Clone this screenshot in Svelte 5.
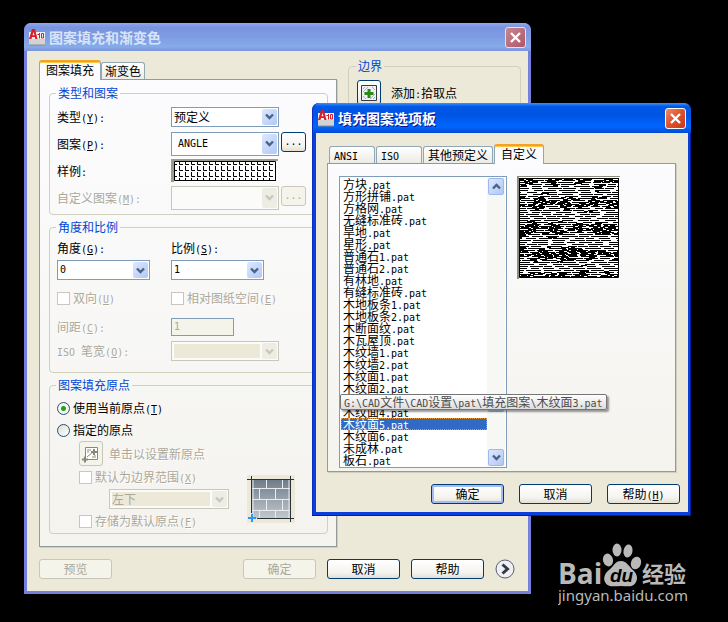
<script>
  const files = [
    "方块.pat", "方形拼铺.pat", "方格网.pat", "无缝标准砖.pat", "旱地.pat", "星形.pat",
    "普通石1.pat", "普通石2.pat", "有林地.pat", "有缝标准砖.pat", "木地板条1.pat", "木地板条2.pat",
    "木断面纹.pat", "木瓦屋顶.pat", "木纹墙1.pat", "木纹墙2.pat", "木纹面1.pat", "木纹面2.pat",
    "木纹面3.pat", "木纹面4.pat", "木纹面5.pat", "木纹面6.pat", "未成林.pat", "板石.pat"
  ]
  const hovered = "木纹面3.pat"
  const folder = "G:\\CAD文件\\CAD设置\\pat\\填充图案\\"

  let selected = $state("木纹面5.pat")
  let origin = $state("current")

  // latin runs get the narrow mono face, "&X" marks a mnemonic
  function split(text) {
    return text.match(/&.|[\x20-\x25\x27-\x7e]+|[^\x00-\x7f]+/g).map((s) => ({
      s: s.replace("&", ""),
      key: s[0] === "&",
      latin: s.charCodeAt(0) < 128
    }))
  }

  // wood grain: long dashes on every other line, filled in between where the wave is high
  function grain() {
    let seed = 11
    const rnd = () => (seed = (seed * 16807) % 2147483647) / 2147483647
    let d = ""
    for (let y = 0; y < 100; y++) {
      let x = -Math.floor(rnd() * 10)
      while (x < 100) {
        const wave = Math.sin((x * Math.PI * 2) / 25 + y / 8) + 1.5 * Math.cos((y * Math.PI * 2) / 25)
        const main = y % 2 === 0
        const len = main ? 8 + Math.floor(rnd() * 10) : 4 + Math.floor(rnd() * 6)
        if (main || rnd() * 3 - 0.8 < wave) d += `M${x} ${y}h${len}v1h-${len}z`
        x += len + 1 + Math.floor(rnd() * (wave > 0 ? 3 : 6))
      }
    }
    return d
  }
  const grainPath = grain()
</script>

{#snippet t(text)}{#each split(text) as p}{#if p.key}<u class="en">{p.s}</u>{:else if p.latin}<span class="en">{p.s}</span>{:else}{p.s}{/if}{/each}{/snippet}

{#snippet appIcon()}
  <svg class="app-icon" width="16" height="17" viewBox="0 0 16 17" aria-hidden="true">
    <path d="M0 3h16v13H0z" fill="#f2f2f4" />
    <path d="M0 10h16v6H0z" fill="#d3d3d6" />
    <path d="M0 16h16" stroke="#8d8a88" stroke-width="1" />
    <path fill-rule="evenodd" d="M3 0h3l2.500 10H6.300l-.5-2H3l-.5 2H0zM4.500 3 3.500 6.300h2z" fill="#d81f26" />
    <path d="M8.500 5.500h1.500M10.500 4v5.500M12.500 4.500h2v4.500h-2z" fill="none" stroke="#d81f26" />
  </svg>
{/snippet}

{#snippet cross()}
  <svg width="13" height="13" viewBox="0 0 13 13" aria-hidden="true"><path d="M2 2l9 9M11 2l-9 9" stroke="#fff" stroke-width="2.400" /></svg>
{/snippet}

{#snippet chevron()}
  <svg width="9" height="7" viewBox="0 0 9 7" aria-hidden="true"><path d="M1 1.500l3.500 3.500L8 1.500" fill="none" stroke="currentColor" stroke-width="2.400" /></svg>
{/snippet}

{#snippet combo(id, value, extra, disabled = false)}
  <span class="combo {extra}" class:disabled>
    <select {id} {disabled}><option>{value}</option></select>
    <span class="arrow">{@render chevron()}</span>
  </span>
{/snippet}

<main>
  <section class="window back" aria-label="图案填充和渐变色">
    <header>
      {@render appIcon()}
      <h1>图案填充和渐变色</h1>
      <button type="button" class="close" aria-label="关闭">{@render cross()}</button>
    </header>
    <div class="body">
      <div class="columns">
        <div>
          <div class="tabs">
            <button type="button" class="tab active">图案填充</button>
            <button type="button" class="tab">渐变色</button>
          </div>
          <div class="panel settings">
            <fieldset>
              <legend>类型和图案</legend>
              <div class="form">
                <label for="type">{@render t("类型(&Y):")}</label>
                <div>{@render combo("type", "预定义", "wide")}</div>
                <label for="pattern">{@render t("图案(&P):")}</label>
                <div class="pick">
                  {@render combo("pattern", "ANGLE", "wide tall latin indent")}
                  <button type="button" class="btn more">...</button>
                </div>
                <span>{@render t("样例:")}</span>
                <svg class="swatch" width="107" height="23" viewBox="0 0 107 23" aria-hidden="true">
                  <defs>
                    <pattern id="angle" width="6" height="6" patternUnits="userSpaceOnUse">
                      <path d="M2.500 1v4.500H6" fill="none" stroke="#000" />
                    </pattern>
                  </defs>
                  <path d="M0 0h107v23H0z" fill="#fff" />
                  <path d="M0 0h107v2H3v21H0z" fill="#9d9a8e" />
                  <path d="M3 3h102v19H3z" fill="url(#angle)" />
                  <path d="M3.500 2.500h101v19h-101z" fill="none" stroke="#000" />
                </svg>
                <label class="off" for="custom">{@render t("自定义图案(&M):")}</label>
                <div class="pick">
                  {@render combo("custom", "", "wide tall", true)}
                  <button type="button" class="btn more" disabled>...</button>
                </div>
              </div>
            </fieldset>

            <fieldset>
              <legend>角度和比例</legend>
              <div class="scale">
                <label for="angle-value">{@render t("角度(&G):")}</label>
                <label for="scale-value">{@render t("比例(&S):")}</label>
                {@render combo("angle-value", "0", "latin")}
                {@render combo("scale-value", "1", "latin")}
                <label class="check off"><input type="checkbox" disabled /><span>{@render t("双向(&U)")}</span></label>
                <label class="check off"><input type="checkbox" disabled /><span>{@render t("相对图纸空间(&E)")}</span></label>
                <label class="off" for="spacing">{@render t("间距(&C):")}</label>
                <input id="spacing" class="text" type="text" value="1" disabled />
                <label class="off" for="pen">{@render t("ISO 笔宽(&O):")}</label>
                {@render combo("pen", "", "wide filled", true)}
              </div>
            </fieldset>

            <fieldset>
              <legend>图案填充原点</legend>
              <div class="origin">
                <label class="check"><input type="radio" name="origin" value="current" bind:group={origin} /><span>{@render t("使用当前原点(&T)")}</span></label>
                <label class="check"><input type="radio" name="origin" value="custom" bind:group={origin} /><span>指定的原点</span></label>
                <div class="nested">
                  <div class="set-origin off">
                    <button type="button" class="btn icon" disabled aria-label="单击以设置新原点">
                      <svg width="18" height="18" viewBox="0 0 18 18" aria-hidden="true">
                        <path d="M3.500 2.500h12v12h-12z" fill="#fff" stroke="#8c8874" />
                        <path d="M5 4h4v2H7v2H5zM12 10h2v3h-4v-2h2z" fill="#c8c5b4" />
                        <path d="M12 4v6M9 7h6M3 11.500v6M0 14.500h6" stroke="#8c8874" stroke-width="2" />
                        <path d="M5 12l6-5" stroke="#8c8874" />
                      </svg>
                    </button>
                    <span>单击以设置新原点</span>
                  </div>
                  <div class="extent">
                    <div>
                      <label class="check off"><input type="checkbox" disabled /><span>{@render t("默认为边界范围(&X)")}</span></label>
                      <div class="corner">{@render combo("corner", "左下", "corner-box filled", true)}</div>
                      <label class="check off"><input type="checkbox" disabled /><span>{@render t("存储为默认原点(&F)")}</span></label>
                    </div>
                    <svg width="48" height="48" viewBox="0 0 48 48" aria-hidden="true">
                      <defs>
                        <linearGradient id="brick" x2="0" y2="1">
                          <stop offset="0" stop-color="#6f7c88" />
                          <stop offset="1" stop-color="#c3c8cf" />
                        </linearGradient>
                      </defs>
                      <path d="M0 0h48v48H0z" fill="#ece9d8" />
                      <path d="M5 5h38v38H5z" fill="url(#brick)" />
                      <path d="M5 13.500h38M5 24.500h38M5 35.500h38M19.500 5v8M35.500 5v8M12.500 14v10M28.500 14v10M19.500 25v10M35.500 25v10M12.500 36v7M28.500 36v7M6 5v38M42 5v38" stroke="#e8ebf0" fill="none" />
                      <path d="M0 4.500h47M10 43.500h37M4.500 1v37M43.500 1v46" stroke="#2c3338" />
                      <path d="M5 39v8M1 43h8" stroke="#3195f5" stroke-width="2" />
                    </svg>
                  </div>
                </div>
              </div>
            </fieldset>
          </div>
        </div>

        <fieldset class="boundary">
          <legend>边界</legend>
          <div class="add-point">
            <button type="button" class="btn icon" aria-label="添加:拾取点">
              <svg width="16" height="16" viewBox="0 0 16 16" aria-hidden="true">
                <path d="M.500.500h15v15H.500z" fill="#eef2f5" stroke="#333c44" />
                <path d="M2 4l2-2M2 7l5-5M9 14l5-5M12 14l2-2M11 2l3 3M2 11l3 3" stroke="#aab4bc" />
                <path d="M8 4v9M3.500 8.500h9" stroke="#2a8a10" stroke-width="3" />
              </svg>
            </button>
            <span>{@render t("添加:拾取点")}</span>
          </div>
        </fieldset>
      </div>

      <footer>
        <button type="button" class="btn preview-btn" disabled>预览</button>
        <button type="button" class="btn" disabled>确定</button>
        <button type="button" class="btn">取消</button>
        <button type="button" class="btn">帮助</button>
        <button type="button" class="expand" aria-label="更多选项">
          <svg width="20" height="20" viewBox="0 0 20 20" aria-hidden="true">
            <circle cx="10" cy="10" r="9" fill="#eef0f5" stroke="#5b6068" />
            <path d="M7.500 5.500l5 4.500-5 4.500" fill="none" stroke="#343a46" stroke-width="3" />
          </svg>
        </button>
      </footer>
    </div>
  </section>

  <section class="window front" aria-label="填充图案选项板">
    <header>
      {@render appIcon()}
      <h1>填充图案选项板</h1>
      <button type="button" class="close" aria-label="关闭">{@render cross()}</button>
    </header>
    <div class="body">
      <div class="tabs">
        <button type="button" class="tab">{@render t("ANSI")}</button>
        <button type="button" class="tab">{@render t("ISO")}</button>
        <button type="button" class="tab">其他预定义</button>
        <button type="button" class="tab active">自定义</button>
      </div>
      <div class="panel palette">
        <div class="listbox">
          <ul role="listbox" aria-label="自定义">
            {#each files as file}
              <!-- svelte-ignore a11y_click_events_have_key_events -->
              <li role="option" aria-selected={file === selected} class:selected={file === selected} onclick={() => (selected = file)}>
                {#if file === hovered}
                  <span class="tooltip">{@render t(folder + file)}</span>
                {:else}
                  {@render t(file)}
                {/if}
              </li>
            {/each}
          </ul>
          <div class="scrollbar">
            <button type="button" class="up" aria-label="向上">{@render chevron()}</button>
            <span class="thumb"></span>
            <button type="button" aria-label="向下">{@render chevron()}</button>
          </div>
        </div>
        <svg class="sample" width="103" height="103" viewBox="0 0 103 103" aria-hidden="true">
          <path d="M0 0h103v103H0z" fill="#fff" />
          <path d="M0 0h103v1H2v102H0z" fill="#8f8c7e" />
          <svg x="2" y="2" width="100" height="100" viewBox="0 0 100 100">
            <path d={grainPath} shape-rendering="crispEdges" />
            <path d="M.500.500h99v99H.500z" fill="none" stroke="#000" />
          </svg>
        </svg>
      </div>
      <footer>
        <button type="button" class="btn default">确定</button>
        <button type="button" class="btn">取消</button>
        <button type="button" class="btn">{@render t("帮助(&H)")}</button>
      </footer>
    </div>
  </section>

  <svg class="watermark" width="134" height="66" viewBox="0 0 134 66" role="img" aria-label="Baidu 经验">
    <g fill="#b9b9b9">
      <text x="0" y="41" class="brand">Bai</text>
      <ellipse cx="50" cy="17" rx="5" ry="6.500" transform="rotate(-15 50 17)" />
      <ellipse cx="59" cy="7" rx="4.500" ry="6.500" />
      <ellipse cx="70" cy="8" rx="4.500" ry="6.500" transform="rotate(10 70 8)" />
      <ellipse cx="78" cy="20" rx="5" ry="6.500" transform="rotate(20 78 20)" />
      <path d="M63 18c6 0 8 6 12 9 4 4 5 8 3 12-3 6-9 4-15 4s-13 2-16-4c-2-4 0-9 4-12 5-4 6-9 12-9z" />
      <text x="84" y="39" class="jy">经验</text>
      <text x="0" y="58" class="url">jingyan.baidu.com</text>
    </g>
    <text x="52" y="39" class="du">du</text>
  </svg>
</main>

<style>
  :global(body) {
    background: #000;
  }

  main {
    position: relative;
    min-height: 100vh;
    overflow: hidden;
    font: 12px/16px "Noto Sans CJK SC", "Liberation Sans", sans-serif;
    color: #000;
  }

  main :global(*) {
    box-sizing: border-box;
  }

  button,
  input,
  select {
    margin: 0;
    font: inherit;
    color: inherit;
  }

  svg {
    display: block;
    flex: none;
  }

  .en {
    font-family: "DejaVu Sans Mono", monospace;
    font-size: 10px;
    line-height: 10px;
    white-space: pre;
  }

  .window {
    position: absolute;
    border-radius: 7px 7px 0 0;
  }

  .back {
    left: 24px;
    right: 197px;
    top: 23px;
    padding: 0 3px 3px;
    background: #7480dc;
  }

  .front {
    left: 312px;
    right: 37px;
    top: 103px;
    padding: 0 3px 4px 4px;
    background: #0a3fdc;
    box-shadow: inset -1px -1px #001ea0, inset 1px 0 #0a2fc0;
  }

  header {
    display: flex;
    align-items: center;
    gap: 4px;
    height: 28px;
    margin: 0 -3px;
    padding: 0 5px;
    border-radius: 7px 7px 0 0;
    background: linear-gradient(#8ea9ec, #7a94df 15%, #7f9ce3 50%, #86abea 85%, #7b92dc);
    color: #d8e4f8;
  }

  .front header {
    height: 30px;
    background: linear-gradient(#3a91ff, #0058e6 12%, #0054e3 40%, #0066ff 80%, #0049d0);
    color: #fff;
    text-shadow: 1px 1px #0f1089;
  }

  h1 {
    flex: 1;
    margin: 0;
    font-size: 14px;
    line-height: 20px;
    font-weight: 700;
  }

  .close {
    display: grid;
    place-items: center;
    width: 21px;
    height: 21px;
    padding: 0;
    border: 1px solid #dfe3f4;
    border-radius: 3px;
    background: linear-gradient(135deg, #c98591, #ad5868);
  }

  .front .close {
    border-color: #fff;
    background: linear-gradient(135deg, #ee8a68, #e0502a 50%, #c8381a);
  }

  .body {
    background: #ece9d8;
  }

  .back .body {
    padding: 9px 7px 12px 12px;
  }

  .front .body {
    padding: 11px 12px 8px 11px;
  }

  .columns {
    display: grid;
    grid-template-columns: 298px 1fr;
    gap: 11px;
    align-items: start;
  }

  .tabs {
    display: flex;
    align-items: flex-end;
  }

  .front .tabs {
    gap: 1px;
    padding-left: 2px;
  }

  .tab {
    min-width: 44px;
    height: 17px;
    padding: 0 3px;
    border: 1px solid #91a7b4;
    border-bottom: none;
    border-radius: 3px 3px 0 0;
    background: linear-gradient(#fff, #ecebe6);
    line-height: 16px;
    text-align: left;
  }

  .front .tab {
    min-width: 46px;
    padding: 0 4px;
  }

  .tab.active {
    position: relative;
    height: 20px;
    margin-bottom: -1px;
    padding: 0 6px 2px;
    border-top: 2px solid #f3a02c;
    background: #fcfcfe;
    box-shadow: inset 0 1px #ffc73c;
  }

  .panel {
    border: 1px solid #919b9c;
    background: linear-gradient(#fcfcfe, #f4f3ee);
    box-shadow: 1px 1px #d0cebf;
  }

  .settings {
    padding: 5px 8px 12px 9px;
  }

  fieldset {
    position: relative;
    min-width: 0;
    margin: 0 0 4px;
    padding: 0 0 5px 7px;
    border: 1px solid #d0d0bf;
    border-radius: 4px;
  }

  .settings fieldset:last-child {
    margin-bottom: 0;
    padding-bottom: 1px;
  }

  legend {
    margin-left: -1px;
    padding: 0 2px;
    color: #0046d5;
    line-height: 16px;
  }

  .off {
    color: #aca899;
    text-shadow: 1px 1px #fff;
  }

  .form {
    display: grid;
    grid-template-columns: 114px 1fr;
    grid-auto-rows: 23px;
    gap: 4px 0;
    align-items: center;
    padding-top: 4px;
  }

  .pick {
    display: flex;
    gap: 2px;
    align-items: flex-start;
  }

  .combo {
    display: grid;
    width: 93px;
    height: 20px;
    border: 1px solid #7f9db9;
    background: #fff;
  }

  .wide {
    width: 108px;
  }

  .tall {
    height: 24px;
  }

  .corner-box {
    width: 120px;
  }

  select {
    grid-area: 1 / 1;
    width: 100%;
    height: 100%;
    padding: 0 18px 0 2px;
    appearance: none;
    border: none;
    border-radius: 0;
    background: none;
    line-height: 16px;
  }

  .latin select {
    font: 10px/16px "DejaVu Sans Mono", monospace;
  }

  .indent select {
    padding-left: 6px;
  }

  .arrow {
    grid-area: 1 / 1;
    justify-self: end;
    display: grid;
    place-items: center;
    width: 15px;
    margin: 1px;
    border-radius: 2px;
    background: linear-gradient(135deg, #dde8fe, #b0c8f6);
    color: #4d6185;
    pointer-events: none;
  }

  .disabled {
    border-color: #c9c7ba;
    background: #fbfbf9;
    color: #aca899;
  }

  .disabled .arrow {
    background: #eeede5;
    color: #c9c7ba;
  }

  .disabled select {
    opacity: 1;
  }

  .filled select {
    width: auto;
    height: auto;
    margin: 2px 18px 2px 2px;
    padding: 0;
    background: #ece9d8;
    line-height: 14px;
  }

  .btn {
    width: 73px;
    height: 20px;
    padding: 0;
    border: 1px solid #003c74;
    border-radius: 3px;
    background: linear-gradient(#fff, #f4f3ef 70%, #e2dfd4);
    line-height: 16px;
    white-space: nowrap;
  }

  .btn:disabled {
    border-color: #c9c7ba;
    background: #f5f4ea;
    color: #aca899;
  }

  .default {
    box-shadow: inset 0 0 0 2px #a3bdf0;
  }

  .more {
    width: 25px;
    font: 10px/14px "DejaVu Sans Mono", monospace;
  }

  .icon {
    display: grid;
    place-items: center;
    width: 24px;
    height: 25px;
  }

  .scale {
    display: grid;
    grid-template-columns: 114px 1fr;
    grid-template-rows: 24px 20px 36px 21px 28px;
    align-items: center;
    padding: 1px 0 2px;
  }

  .check {
    display: flex;
    gap: 3px;
    align-items: center;
    height: 22px;
  }

  .check input {
    width: 13px;
    height: 13px;
    appearance: none;
    border: 1px solid #c9c7ba;
    background: #fff;
  }

  .check input[type="radio"] {
    border: 1px solid #21517c;
    border-radius: 50%;
    background: linear-gradient(135deg, #dcdcd7, #fff);
  }

  .check input[type="radio"]:checked {
    background: radial-gradient(circle, #21a121 2px, #f4f4f0 3px);
  }

  .text {
    width: 63px;
    height: 18px;
    padding: 0 2px;
    border: 1px solid #7f9db9;
    background: #f5f4ea;
    color: #aca899;
    font: 10px/16px "DejaVu Sans Mono", monospace;
  }

  .origin {
    padding-top: 4px;
  }

  .nested {
    padding-left: 22px;
  }

  .set-origin {
    display: flex;
    gap: 6px;
    align-items: center;
  }

  .extent {
    display: flex;
    gap: 18px;
    align-items: center;
  }

  .corner {
    padding: 1px 0 1px 30px;
  }

  .boundary {
    height: 240px;
    margin-top: -2px;
    padding-left: 8px;
  }

  .add-point {
    display: flex;
    gap: 10px;
    align-items: center;
    padding-top: 6px;
  }

  footer {
    display: flex;
    gap: 11px;
    align-items: center;
    justify-content: flex-end;
    padding-top: 12px;
  }

  .back footer {
    padding-right: 6px;
  }

  .front footer {
    gap: 15px;
    margin-right: -4px;
  }

  .preview-btn {
    margin-right: auto;
  }

  .expand {
    padding: 0;
    border: none;
    background: none;
  }

  .palette {
    display: flex;
    gap: 10px;
    align-items: flex-start;
    padding: 12px 11px 3px;
  }

  .listbox {
    display: flex;
    width: 168px;
    padding: 1px;
    border: 1px solid #7f9db9;
    background: #fff;
  }

  ul {
    flex: 1;
    margin: 0;
    padding: 0;
    list-style: none;
  }

  li {
    position: relative;
    height: 12px;
    padding-left: 2px;
    line-height: 12px;
    white-space: nowrap;
  }

  .selected {
    background: #316ac5;
    color: #fff;
    outline: 1px dotted #e0953a;
    outline-offset: -1px;
  }

  .tooltip {
    position: absolute;
    z-index: 2;
    left: -1px;
    top: 0;
    padding: 0 3px;
    border: 1px solid #767676;
    border-radius: 2px;
    background: linear-gradient(#fff, #dcdcdc);
    box-shadow: 2px 2px 2px #00000066;
    color: #4c4c4c;
    line-height: 13px;
  }

  .scrollbar {
    display: flex;
    flex-direction: column;
    width: 18px;
    background: #f7f7f3;
  }

  .scrollbar button,
  .thumb {
    display: grid;
    place-items: center;
    height: 17px;
    margin: 0 1px;
    padding: 0;
    border: 1px solid #9db8ee;
    border-radius: 2px;
    background: linear-gradient(135deg, #dde8fe, #b0c8f6);
    color: #4d6185;
  }

  .scrollbar .thumb {
    margin-top: auto;
    margin-bottom: 37px;
  }

  .up svg {
    transform: rotate(180deg);
  }

  .watermark {
    position: absolute;
    right: 36px;
    bottom: 13px;
  }

  .brand {
    font: 700 28px "Open Sans", sans-serif;
  }

  .jy {
    font: 700 22px "Noto Sans CJK SC", sans-serif;
  }

  .url {
    font: 15px "Noto Sans", sans-serif;
  }

  .du {
    font: italic 700 19px "Liberation Sans", sans-serif;
    fill: #000;
  }
</style>
